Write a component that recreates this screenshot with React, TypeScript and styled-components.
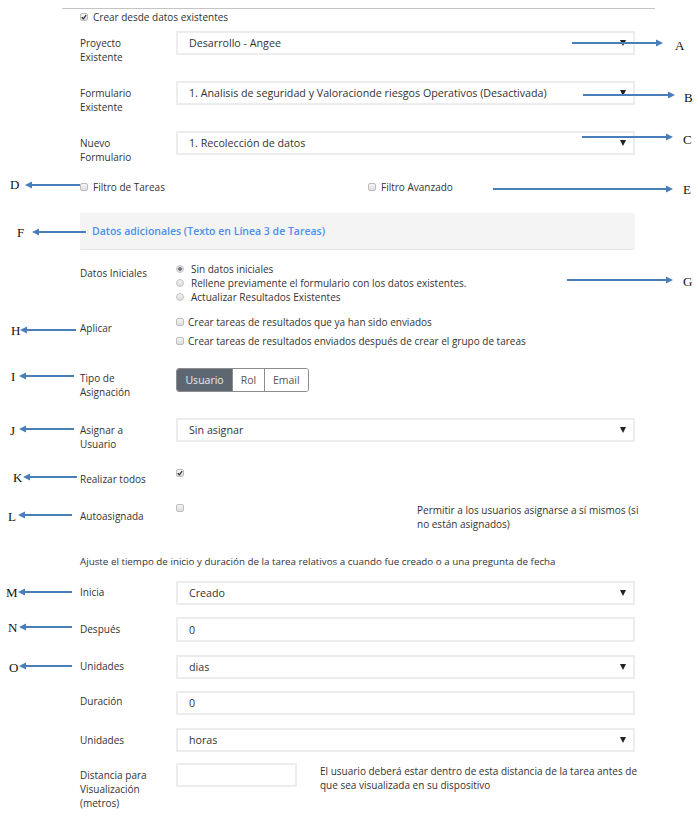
import React from "react";
import styled, { createGlobalStyle } from "styled-components";

const GlobalStyle = createGlobalStyle`
  html, body { margin: 0; padding: 0; background: #fff; }
  body { font-family: "Open Sans", "Liberation Sans", Arial, sans-serif; color: #333; }
  * { box-sizing: border-box; }
`;

const Page = styled.div`
  position: relative;
  width: 698px;
  height: 817px;
  padding-top: 8px;
  overflow: hidden;
`;

const TopRule = styled.div`
  margin-left: 62px;
  width: 593px;
  height: 1px;
  background: #c4c4c4;
`;

const Form = styled.div`
  display: flex;
  flex-direction: column;
  margin-left: 80px;
  width: 555px;
`;

const FieldRow = styled.div<{ $mt: number }>`
  display: grid;
  grid-template-columns: 96px 459px;
  align-items: start;
  margin-top: ${(p) => p.$mt}px;
`;

const Label = styled.div<{ $pt: number }>`
  padding-top: ${(p) => p.$pt}px;
  font-size: 10px;
  line-height: 14px;
  color: #333;
  white-space: nowrap;
`;

const Control = styled.div<{ $pt?: number }>`
  padding-top: ${(p) => p.$pt ?? 0}px;
  display: flex;
  flex-direction: column;
`;

const Box = styled.div<{ $h: number; $w?: number }>`
  height: ${(p) => p.$h}px;
  width: ${(p) => p.$w ?? 459}px;
  border: 2px solid #ededed;
  background: #fff;
  padding: 0 7px 0 11px;
  display: flex;
  align-items: center;
  justify-content: space-between;
  font-size: 10.7px;
  color: #333;
  white-space: nowrap;
`;

const Caret = styled.span`
  width: 0;
  height: 0;
  border-left: 3.5px solid transparent;
  border-right: 3.5px solid transparent;
  border-top: 6px solid #222;
`;

const CheckLine = styled.label<{ $mt?: number; $gap?: number }>`
  display: flex;
  align-items: center;
  gap: ${(p) => p.$gap ?? 4}px;
  margin-top: ${(p) => p.$mt ?? 0}px;
  font-size: 10px;
  line-height: 14px;
  color: #333;
  white-space: nowrap;
`;

const Check = styled.span`
  flex: none;
  width: 8px;
  height: 8px;
  border: 1px solid #bdbdbd;
  border-radius: 2px;
  background: linear-gradient(#f4f4f4, #dedede);
  display: flex;
  align-items: center;
  justify-content: center;
  color: #333;
`;

const Radio = styled.span<{ $on?: boolean }>`
  flex: none;
  width: 8px;
  height: 8px;
  border: 1px solid #c2c2c2;
  border-radius: 50%;
  background: ${(p) =>
    p.$on ? "radial-gradient(circle, #777 0 1.6px, #e6e6e6 2px)" : "linear-gradient(#f2f2f2, #dddddd)"};
`;

const Radios = styled.div`
  display: flex;
  flex-direction: column;
`;

const FilterRow = styled.div<{ $mt: number }>`
  display: grid;
  grid-template-columns: 288px 1fr;
  margin-top: ${(p) => p.$mt}px;
`;

const Panel = styled.div<{ $mt: number }>`
  margin-top: ${(p) => p.$mt}px;
  height: 37px;
  background: #f4f4f4;
  border-bottom: 1px solid #e6e6e6;
  border-radius: 2px;
  padding-left: 12px;
  display: flex;
  align-items: center;
  font-size: 10.5px;
  font-weight: 600;
  color: #4d8fe8;
`;

const Segmented = styled.div`
  display: flex;
  height: 24px;
  width: 133px;
  border: 1px solid #8d8d8d;
  border-radius: 3px;
  overflow: hidden;
`;

const Seg = styled.div<{ $w: number; $active?: boolean }>`
  width: ${(p) => p.$w}px;
  display: flex;
  align-items: center;
  justify-content: center;
  font-size: 10.5px;
  background: ${(p) => (p.$active ? "#5e6771" : "#fff")};
  color: ${(p) => (p.$active ? "#e9ecef" : "#555")};
  & + & {
    border-left: 1px solid #8d8d8d;
  }
`;

const SplitControl = styled.div<{ $cols: string }>`
  display: grid;
  grid-template-columns: ${(p) => p.$cols};
  align-items: start;
`;

const Note = styled.div<{ $pt?: number }>`
  padding-top: ${(p) => p.$pt ?? 0}px;
  font-size: 10px;
  line-height: 14px;
  color: #333;
  white-space: nowrap;
`;

const Text = styled.div<{ $mt: number }>`
  margin-top: ${(p) => p.$mt}px;
  font-size: 9.8px;
  line-height: 14px;
  color: #333;
  white-space: nowrap;
`;

const ArrowSvg = styled.svg<{ $x: number; $y: number }>`
  position: absolute;
  left: ${(p) => p.$x}px;
  top: ${(p) => p.$y - 5}px;
  overflow: visible;
`;

const Mark = styled.span<{ $x: number; $y: number }>`
  position: absolute;
  left: ${(p) => p.$x}px;
  top: ${(p) => p.$y - 8}px;
  font-family: "Liberation Serif", "Times New Roman", serif;
  font-size: 13px;
  line-height: 16px;
  color: #111;
`;

const Tick = () => (
  <svg width="6" height="6" viewBox="0 0 6 6">
    <path d="M0.8 3.2 L2.4 4.8 L5.2 1.2" fill="none" stroke="#333" strokeWidth="1.3" />
  </svg>
);

const Arrow = ({ from, to, y }: { from: number; to: number; y: number }) => {
  const left = Math.min(from, to);
  const w = Math.abs(to - from);
  const right = to > from;
  const tip = right ? w : 0;
  const base = right ? w - 7 : 7;
  const tail = right ? 0 : w;
  return (
    <ArrowSvg $x={left} $y={y} width={w} height={10}>
      <line x1={tail} y1={5} x2={base} y2={5} stroke="#4a7ebb" strokeWidth={1.8} />
      <polygon points={`${tip},5 ${base},1.5 ${base},8.5`} fill="#4a7ebb" />
    </ArrowSvg>
  );
};

const arrows = [
  { from: 572, to: 663, y: 43 },
  { from: 583, to: 675, y: 95 },
  { from: 582, to: 673, y: 137 },
  { from: 80, to: 25, y: 185 },
  { from: 493, to: 673, y: 189 },
  { from: 86, to: 32, y: 232 },
  { from: 567, to: 673, y: 280 },
  { from: 76, to: 20, y: 330 },
  { from: 74, to: 19, y: 376 },
  { from: 74, to: 19, y: 429 },
  { from: 77, to: 23, y: 477 },
  { from: 72, to: 18, y: 515 },
  { from: 72, to: 18, y: 592 },
  { from: 72, to: 19, y: 627 },
  { from: 72, to: 19, y: 666 },
];

const marks = [
  { l: "A", x: 675, y: 46 },
  { l: "B", x: 684, y: 98 },
  { l: "C", x: 683, y: 140 },
  { l: "D", x: 10, y: 185 },
  { l: "E", x: 683, y: 190 },
  { l: "F", x: 17, y: 233 },
  { l: "G", x: 683, y: 282 },
  { l: "H", x: 11, y: 331 },
  { l: "I", x: 11, y: 377 },
  { l: "J", x: 10, y: 431 },
  { l: "K", x: 13, y: 478 },
  { l: "L", x: 8, y: 517 },
  { l: "M", x: 6, y: 593 },
  { l: "N", x: 8, y: 628 },
  { l: "O", x: 9, y: 668 },
];

export default function App() {
  return (
    <>
      <GlobalStyle />
      <Page>
        <TopRule />
        <Form>
          <CheckLine $mt={1} $gap={5}>
            <Check>
              <Tick />
            </Check>
            Crear desde datos existentes
          </CheckLine>

          <FieldRow $mt={7}>
            <Label $pt={5}>
              Proyecto
              <br />
              Existente
            </Label>
            <Box $h={24}>
              Desarrollo - Angee
              <Caret />
            </Box>
          </FieldRow>

          <FieldRow $mt={17}>
            <Label $pt={5}>
              Formulario
              <br />
              Existente
            </Label>
            <Box $h={24}>
              1. Analisis de seguridad y Valoracionde riesgos Operativos (Desactivada)
              <Caret />
            </Box>
          </FieldRow>

          <FieldRow $mt={17}>
            <Label $pt={5}>
              Nuevo
              <br />
              Formulario
            </Label>
            <Box $h={24}>
              1. Recolección de datos
              <Caret />
            </Box>
          </FieldRow>

          <FilterRow $mt={16}>
            <CheckLine $gap={5}>
              <Check />
              Filtro de Tareas
            </CheckLine>
            <CheckLine $gap={5}>
              <Check />
              Filtro Avanzado
            </CheckLine>
          </FilterRow>

          <Panel $mt={19}>Datos adicionales (Texto en Línea 3 de Tareas)</Panel>

          <FieldRow $mt={12}>
            <Label $pt={4}>Datos Iniciales</Label>
            <Radios>
              <CheckLine $gap={7}>
                <Radio $on />
                Sin datos iniciales
              </CheckLine>
              <CheckLine $gap={7}>
                <Radio />
                Rellene previamente el formulario con los datos existentes.
              </CheckLine>
              <CheckLine $gap={7}>
                <Radio />
                Actualizar Resultados Existentes
              </CheckLine>
            </Radios>
          </FieldRow>

          <FieldRow $mt={11}>
            <Label $pt={6}>Aplicar</Label>
            <Control>
              <CheckLine>
                <Check />
                Crear tareas de resultados que ya han sido enviados
              </CheckLine>
              <CheckLine $mt={5}>
                <Check />
                Crear tareas de resultados enviados después de crear el grupo de tareas
              </CheckLine>
            </Control>
          </FieldRow>

          <FieldRow $mt={20}>
            <Label $pt={3}>
              Tipo de
              <br />
              Asignación
            </Label>
            <Segmented>
              <Seg $w={56} $active>
                Usuario
              </Seg>
              <Seg $w={32}>Rol</Seg>
              <Seg $w={45}>Email</Seg>
            </Segmented>
          </FieldRow>

          <FieldRow $mt={19}>
            <Label $pt={5}>
              Asignar a
              <br />
              Usuario
            </Label>
            <Box $h={24}>
              Sin asignar
              <Caret />
            </Box>
          </FieldRow>

          <FieldRow $mt={15}>
            <Label $pt={6}>Realizar todos</Label>
            <Control $pt={3}>
              <Check>
                <Tick />
              </Check>
            </Control>
          </FieldRow>

          <FieldRow $mt={17}>
            <Label $pt={6}>Autoasignada</Label>
            <SplitControl $cols="241px 1fr">
              <Control $pt={1}>
                <Check />
              </Control>
              <Note>
                Permitir a los usuarios asignarse a sí mismos (si
                <br />
                no están asignados)
              </Note>
            </SplitControl>
          </FieldRow>

          <Text $mt={24}>
            Ajuste el tiempo de inicio y duración de la tarea relativos a cuando fue creado o a una pregunta de fecha
          </Text>

          <FieldRow $mt={12}>
            <Label $pt={4}>Inicia</Label>
            <Box $h={24}>
              Creado
              <Caret />
            </Box>
          </FieldRow>

          <FieldRow $mt={12}>
            <Label $pt={5}>Después</Label>
            <Box $h={25}>0</Box>
          </FieldRow>

          <FieldRow $mt={13}>
            <Label $pt={4}>Unidades</Label>
            <Box $h={24}>
              dias
              <Caret />
            </Box>
          </FieldRow>

          <FieldRow $mt={12}>
            <Label $pt={3}>Duración</Label>
            <Box $h={24}>0</Box>
          </FieldRow>

          <FieldRow $mt={13}>
            <Label $pt={5}>Unidades</Label>
            <Box $h={24}>
              horas
              <Caret />
            </Box>
          </FieldRow>

          <FieldRow $mt={11}>
            <Label $pt={5}>
              Distancia para
              <br />
              Visualización
              <br />
              (metros)
            </Label>
            <SplitControl $cols="144px 1fr">
              <Box $h={24} $w={121} />
              <Note $pt={1}>
                El usuario deberá estar dentro de esta distancia de la tarea antes de
                <br />
                que sea visualizada en su dispositivo
              </Note>
            </SplitControl>
          </FieldRow>
        </Form>

        {arrows.map((a, i) => (
          <Arrow key={i} from={a.from} to={a.to} y={a.y} />
        ))}
        {marks.map((m) => (
          <Mark key={m.l} $x={m.x} $y={m.y}>
            {m.l}
          </Mark>
        ))}
      </Page>
    </>
  );
}
